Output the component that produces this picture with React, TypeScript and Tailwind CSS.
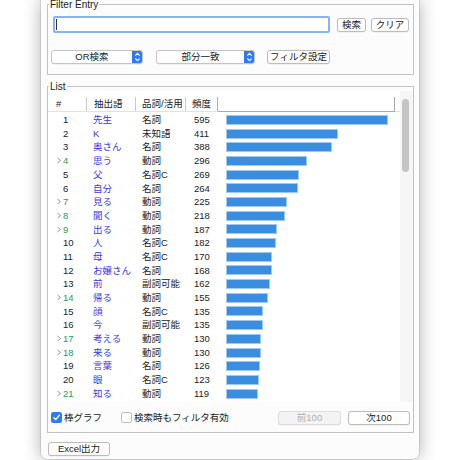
import React from 'react';

type Row = [number, string, string, number, boolean];
const rows: Row[] = [
  [1, '先生', '名詞', 595, false],
  [2, 'K', '未知語', 411, false],
  [3, '奥さん', '名詞', 388, false],
  [4, '思う', '動詞', 296, true],
  [5, '父', '名詞C', 269, false],
  [6, '自分', '名詞', 264, false],
  [7, '見る', '動詞', 225, true],
  [8, '聞く', '動詞', 218, true],
  [9, '出る', '動詞', 187, true],
  [10, '人', '名詞C', 182, false],
  [11, '母', '名詞C', 170, false],
  [12, 'お嬢さん', '名詞', 168, false],
  [13, '前', '副詞可能', 162, false],
  [14, '帰る', '動詞', 155, true],
  [15, '顔', '名詞C', 135, false],
  [16, '今', '副詞可能', 135, false],
  [17, '考える', '動詞', 130, true],
  [18, '来る', '動詞', 130, true],
  [19, '言葉', '名詞', 126, false],
  [20, '眼', '名詞C', 123, false],
  [21, '知る', '動詞', 119, true],
];

function Btn({ children, className = '', disabled = false }: { children: React.ReactNode; className?: string; disabled?: boolean }) {
  return (
    <div
      className={
        'h-[14px] flex items-center justify-center rounded-[3px] border text-[9.5px] leading-none shadow-[0_0.5px_0.5px_rgba(0,0,0,0.08)] ' +
        (disabled ? 'border-[#dcdcdc] bg-[#f3f3f3] text-[#b0b0b0] ' : 'border-[#bcbcbc] bg-white text-[#222] ') +
        className
      }
    >
      {children}
    </div>
  );
}

function Stepper() {
  return (
    <svg width="11" height="14" viewBox="0 0 11 14" className="block">
      <path d="M0 0 H8 Q11 0 11 3 V11 Q11 14 8 14 H0 Z" fill="#2c7cf0" />
      <path d="M3.3 5.6 L5.5 3.4 L7.7 5.6" fill="none" stroke="white" strokeWidth="1.1" />
      <path d="M3.3 8.4 L5.5 10.6 L7.7 8.4" fill="none" stroke="white" strokeWidth="1.1" />
    </svg>
  );
}

function Select({ label, w }: { label: string; w: string }) {
  return (
    <div className={'h-[14px] flex items-stretch rounded-[3px] border border-[#c4c4c4] bg-white overflow-hidden shadow-[0_0.5px_0.5px_rgba(0,0,0,0.08)] ' + w}>
      <div className="flex-1 flex items-center justify-center text-[9.5px] leading-none text-[#222]">{label}</div>
      <div className="-my-px -mr-px">
        <Stepper />
      </div>
    </div>
  );
}

export default function App() {
  return (
    <div className="w-[460px] h-[460px] overflow-hidden bg-white pl-[41px] font-['Liberation_Sans','Noto_Sans_CJK_JP',sans-serif] text-[#222]">
      <div className="w-[378px] h-[459px] bg-[#fcfcfc] rounded-b-[6px] shadow-[0_0_0_0.5px_rgba(0,0,0,0.18),0_0_18px_rgba(0,0,0,0.32)] pl-[6px] pr-[5px] flex flex-col">
        {/* Filter Entry */}
        <fieldset className="border border-[#c2c2c2] w-[367px]">
          <legend className="ml-[1px] px-[1px] text-[10px] leading-[9px] text-[#222]">Filter Entry</legend>
          <div className="pt-[7px] pb-[10px]">
            <div className="flex items-center pl-[5px]">
              <div className="w-[277px] h-[17px] rounded-[2px] border-2 border-[#86b3f3] bg-white flex items-center pl-[1px]">
                <div className="w-px h-[11px] bg-[#333]" />
              </div>
              <Btn className="ml-[7px] w-[29px]">検索</Btn>
              <Btn className="ml-[5px] w-[38px]">クリア</Btn>
            </div>
            <div className="flex items-center pl-[3px] mt-[17px]">
              <Select label="OR検索" w="w-[92px]" />
              <div className="ml-[13px]">
                <Select label="部分一致" w="w-[99px]" />
              </div>
              <Btn className="ml-[12px] w-[63px]">フィルタ設定</Btn>
            </div>
          </div>
        </fieldset>

        {/* List */}
        <fieldset className="mt-[7px] border border-[#c2c2c2] w-[367px]">
          <legend className="ml-[1px] px-[1px] text-[10px] leading-[9px] text-[#222]">List</legend>
          <div className="flex h-[311px]">
            {/* table */}
            <div className="w-[352px] bg-white pt-[6px] overflow-hidden">
              <div className="flex h-[15px] border-b border-[#e2e2e2] text-[9.5px] leading-none text-[#222]">
                <div className="w-[39px] pl-[8px] flex items-center border-r border-[#c9c9c9]">#</div>
                <div className="w-[49px] pl-[7px] flex items-center border-r border-[#c9c9c9]">抽出語</div>
                <div className="w-[50px] pl-[6px] flex items-center border-r border-[#c9c9c9]">品詞/活用</div>
                <div className="w-[32px] pl-[6px] flex items-center border-r border-[#b0b0b0]">頻度</div>
                <div className="w-[177px] border-r border-b border-[#a8a8a8] -mb-px" />
              </div>
              <div className="pt-px">
                {rows.map(([n, word, pos, freq, arrow]) => (
                  <div key={n} className="flex h-[13.7px] items-center text-[9.5px] leading-none">
                    <div className={'w-[39px] flex items-center ' + (arrow ? 'pl-[8px]' : 'pl-[15px]')}>
                      {arrow && (
                        <svg width="7" height="7" viewBox="0 0 7 7" className="block">
                          <path d="M1.5 1 L4.5 3.5 L1.5 6" fill="none" stroke="#8a8a8a" strokeWidth="0.9" />
                        </svg>
                      )}
                      <span className={arrow ? 'text-[#2f9a55]' : 'text-[#222]'}>{n}</span>
                    </div>
                    <div className="w-[49px] pl-[6px] text-[#3a3ae8] whitespace-nowrap">{word}</div>
                    <div className="w-[50px] pl-[6px] text-[#222] whitespace-nowrap">{pos}</div>
                    <div className="w-[32px] pl-[8px] text-[#222]">{freq}</div>
                    <div className="w-[177px] pl-[8px] flex items-center">
                      <div
                        className="h-[10px] bg-[#3a8ddf] border border-[#9ecaf2]"
                        style={{ width: `${(freq / 595) * 162}px` }}
                      />
                    </div>
                  </div>
                ))}
              </div>
            </div>
            {/* scrollbar track */}
            <div className="w-[13px] bg-[#f6f6f6] pt-[8px] pl-[2px]">
              <div className="w-[7px] h-[73px] rounded-full bg-[#c4c4c4]" />
            </div>
          </div>
          <div className="flex items-center h-[15px] mt-[8px] mb-[7px] pl-[3px] pr-[3px] text-[9.5px] leading-none">
            <div className="w-[11px] h-[11px] rounded-[2.5px] bg-[#2a7df3] flex items-center justify-center">
              <svg width="9" height="9" viewBox="0 0 9 9" className="block">
                <path d="M1.8 4.7 L3.7 6.6 L7.3 2.3" fill="none" stroke="white" strokeWidth="1.4" strokeLinecap="round" strokeLinejoin="round" />
              </svg>
            </div>
            <span className="ml-[2px]">棒グラフ</span>
            <div className="ml-[19px] w-[11px] h-[11px] rounded-[2.5px] border border-[#b9b9b9] bg-white" />
            <span className="ml-[2px]">検索時もフィルタ有効</span>
            <Btn disabled className="ml-auto w-[63px]">前100</Btn>
            <Btn className="ml-[7px] w-[62px]">次100</Btn>
          </div>
        </fieldset>

        <Btn className="mt-[9px] ml-[1px] w-[62px]">Excel出力</Btn>
      </div>
    </div>
  );
}
